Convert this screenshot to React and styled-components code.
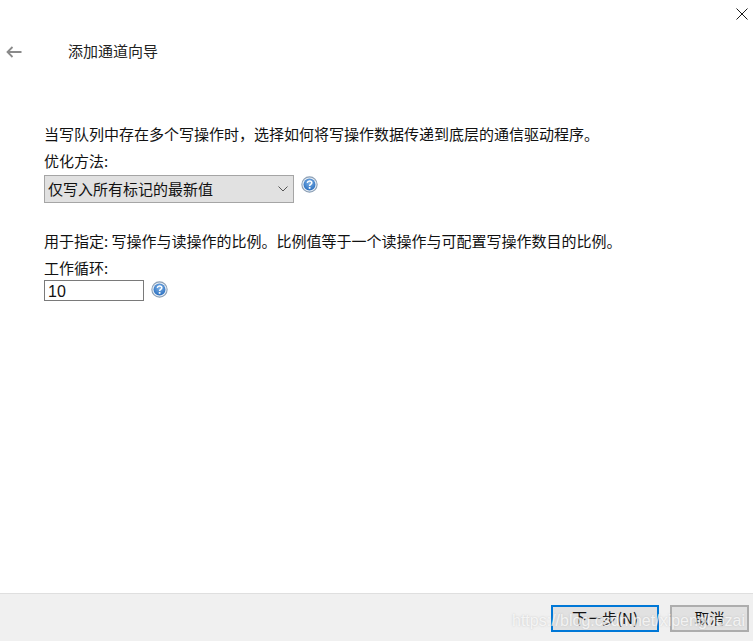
import styled, { createGlobalStyle } from "styled-components";

const GlobalStyle = createGlobalStyle`
  html, body {
    margin: 0;
    padding: 0;
    background: #ffffff;
  }
  * {
    box-sizing: border-box;
  }
`;

const HelpIcon = () => (
    <HelpSvg viewBox="0 0 16 16">
        <defs>
            <radialGradient id="helpFill" cx="50%" cy="35%" r="65%">
                <stop offset="0%" stopColor="#7fb2e6" />
                <stop offset="100%" stopColor="#2a6fc0" />
            </radialGradient>
        </defs>
        <circle cx="8" cy="8" r="7.2" fill="#e8eef5" stroke="#8b9fb5" strokeWidth="1" />
        <circle cx="8" cy="8" r="5.6" fill="url(#helpFill)" />
        <path d="M5.9 6.4c.2-1.2 1.1-1.8 2.2-1.8 1.2 0 2.1.7 2.1 1.8 0 1.5-2.1 1.5-2.1 3" fill="none" stroke="#fff" strokeWidth="1.4" />
        <rect x="7.3" y="10.4" width="1.6" height="1.6" fill="#fff" />
    </HelpSvg>
);

const App = () => {
    return(<>
        <GlobalStyle />
        <Page>
            <TopBar>
                <CloseButton viewBox="0 0 12 12">
                    <path d="M0.5 0.5L11.5 11.5M11.5 0.5L0.5 11.5" stroke="#1a1a1a" strokeWidth="1" fill="none" />
                </CloseButton>
            </TopBar>
            <Header>
                <BackArrow viewBox="0 0 16 12">
                    <path d="M15.5 6H1.5M6.5 1L1.5 6L6.5 11" stroke="#8a8a8a" strokeWidth="1.8" fill="none" />
                </BackArrow>
                <Title>添加通道向导</Title>
            </Header>
            <Content>
                <Section>
                    <Text>当写队列中存在多个写操作时，选择如何将写操作数据传递到底层的通信驱动程序。</Text>
                    <Label>优化方法:</Label>
                    <FieldRow $top={3}>
                        <Select>
                            <span>仅写入所有标记的最新值</span>
                            <svg width="10" height="6" viewBox="0 0 10 6">
                                <path d="M0.5 0.5L5 5L9.5 0.5" stroke="#555" strokeWidth="1" fill="none" />
                            </svg>
                        </Select>
                        <HelpIcon />
                    </FieldRow>
                </Section>
                <Section>
                    <Text>用于指定: 写操作与读操作的比例。比例值等于一个读操作与可配置写操作数目的比例。</Text>
                    <Label>工作循环:</Label>
                    <FieldRow $top={1}>
                        <Input>10</Input>
                        <HelpIcon />
                    </FieldRow>
                </Section>
            </Content>
            <Footer>
                <PrimaryButton>下一步(N)</PrimaryButton>
                <Button>取消</Button>
                <Watermark>https://blog.csdn.net/xipengbozai</Watermark>
            </Footer>
        </Page>
    </>)
}

const Page = styled.div`
    width: 753px;
    height: 641px;
    display: flex;
    flex-direction: column;
    background: #ffffff;
    overflow: hidden;
    font-family: "Noto Sans CJK SC", "Liberation Sans", sans-serif;
    color: #111111;
`;

const TopBar = styled.div`
    height: 37px;
    display: flex;
    justify-content: flex-end;
    padding: 8px 5px 0 0;
`;

const CloseButton = styled.svg`
    width: 12px;
    height: 12px;
`;

const Header = styled.div`
    height: 28px;
    display: flex;
    align-items: center;
    padding-left: 6px;
`;

const BackArrow = styled.svg`
    width: 16px;
    height: 12px;
    margin: 1px 46px 0 0;
`;

const Title = styled.h1`
    margin: 0;
    font-size: 15px;
    font-weight: 400;
    line-height: 28px;
    color: #222222;
`;

const Content = styled.div`
    flex: 1;
    display: flex;
    flex-direction: column;
    gap: 27px;
    padding: 58px 0 0 44px;
`;

const Section = styled.div`
    display: flex;
    flex-direction: column;
`;

const Text = styled.p`
    margin: 0;
    font-size: 15px;
    line-height: 22px;
    white-space: nowrap;
`;

const Label = styled.div`
    margin-top: 5px;
    font-size: 15px;
    line-height: 22px;
`;

const FieldRow = styled.div`
    display: flex;
    align-items: flex-start;
    gap: 7px;
    margin-top: ${(props) => props.$top}px;
`;

const HelpSvg = styled.svg`
    width: 17px;
    height: 17px;
    margin-top: 1px;
`;

const Select = styled.div`
    width: 250px;
    height: 28px;
    display: flex;
    align-items: center;
    justify-content: space-between;
    padding: 0 5px 1px 3px;
    background: #e1e1e1;
    border: 1px solid #a5a5a5;
    font-size: 15px;
`;

const Input = styled.div`
    width: 100px;
    height: 21px;
    display: flex;
    align-items: center;
    padding: 2px 0 0 3px;
    border: 1px solid #7a7a7a;
    font-size: 16px;
    font-family: "Liberation Sans", sans-serif;
`;

const Footer = styled.div`
    position: relative;
    height: 48px;
    display: flex;
    justify-content: flex-end;
    gap: 11px;
    padding: 11px 4px 0 0;
    background: #f0f0f0;
    border-top: 1px solid #dfdfdf;
`;

const Button = styled.div`
    width: 79px;
    height: 27px;
    display: flex;
    align-items: center;
    justify-content: center;
    padding-bottom: 3px;
    background: #e1e1e1;
    border: 2px solid #adadad;
    font-size: 15px;
`;

const PrimaryButton = styled(Button)`
    width: 108px;
    border-color: #0078d7;
`;

const Watermark = styled.span`
    position: absolute;
    left: 512px;
    top: 18px;
    font-family: "Liberation Sans", sans-serif;
    font-size: 16px;
    color: rgba(255, 255, 255, 0.75);
    white-space: nowrap;
    text-shadow: 0 0 2px rgba(170, 170, 170, 0.6);
`;

export default App;
